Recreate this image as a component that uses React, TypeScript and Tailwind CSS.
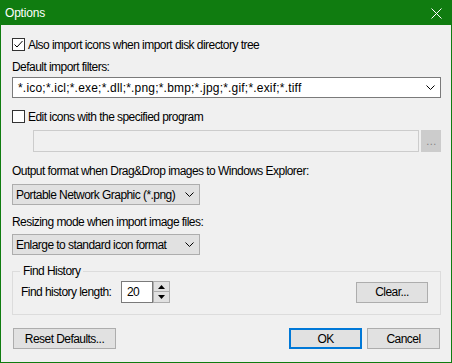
import React from 'react'

const font = { fontFamily: '"Liberation Sans", Arial, sans-serif' }

function Chevron() {
  return (
    <svg width="9" height="5" viewBox="0 0 9 5" className="shrink-0">
      <path d="M0.5 0.5 L4.5 4.5 L8.5 0.5" fill="none" stroke="#000" strokeWidth="1" />
    </svg>
  )
}

function Checkbox({ checked }: { checked?: boolean }) {
  return (
    <div className="w-[13px] h-[13px] border border-[#333] bg-white flex items-center justify-center shrink-0">
      {checked && (
        <svg width="11" height="11" viewBox="0 0 11 11">
          <path d="M1.5 5.5 L4 8 L9.5 2" fill="none" stroke="#000" strokeWidth="1" />
        </svg>
      )}
    </div>
  )
}

function Button({ children, w, primary }: { children: React.ReactNode; w: string; primary?: boolean }) {
  return (
    <div
      className={`${w} h-[21px] flex items-center justify-center bg-[#e1e1e1] text-black whitespace-nowrap ${
        primary ? 'border-2 border-[#0078d7]' : 'border border-[#adadad]'
      }`}
    >
      {children}
    </div>
  )
}

function Dropdown({ label }: { label: string }) {
  return (
    <div className="w-[188px] h-[21px] border border-[#adadad] bg-[#e1e1e1] flex items-center pl-[3px] pr-[5px] whitespace-nowrap">
      <span className="flex-1">{label}</span>
      <Chevron />
    </div>
  )
}

export default function App() {
  return (
    <div style={font} className="w-[452px] h-[363px] border border-[#107c10] bg-[#f0f0f0] text-[12px] leading-[16px] tracking-[-0.55px] text-black flex flex-col overflow-hidden whitespace-nowrap">
      {/* Barra de titulo */}
      <div className="h-[24px] bg-[#107c10] flex items-center justify-between pl-[4px] pr-[9px] text-white shrink-0">
        <span className="text-[12px] tracking-[-0.2px]">Options</span>
        <svg width="11" height="11" viewBox="0 0 11 11">
          <path d="M0.5 0.5 L10.5 10.5 M10.5 0.5 L0.5 10.5" stroke="#fff" strokeWidth="1" />
        </svg>
      </div>

      <div className="pl-[11px] pr-[10px] flex flex-col">
        <div className="mt-[12px] h-[15px] flex items-center gap-[3px]">
          <Checkbox checked />
          <span>Also import icons when import disk directory tree</span>
        </div>

        <div className="mt-[7px] h-[16px]">Default import filters:</div>
        <div className="mt-[2px] h-[21px] border border-[#7a7a7a] bg-white flex items-center pl-[5px] pr-[5px]">
          <span className="flex-1 tracking-[0.2px]">*.ico;*.icl;*.exe;*.dll;*.png;*.bmp;*.jpg;*.gif;*.exif;*.tiff</span>
          <Chevron />
        </div>

        <div className="mt-[11px] h-[15px] flex items-center gap-[3px]">
          <Checkbox />
          <span>Edit icons with the specified program</span>
        </div>

        <div className="mt-[6px] h-[22px] flex pl-[21px] gap-[2px]">
          <div className="w-[386px] border border-[#cccccc] bg-[#f0f0f0]" />
          <div className="w-[20px] bg-[#cccccc] flex items-center justify-center text-[#838383] text-[11px]">…</div>
        </div>

        <div className="mt-[11px] h-[16px]">Output format when Drag&amp;Drop images to Windows Explorer:</div>
        <div className="mt-[5px]">
          <Dropdown label="Portable Network Graphic (*.png)" />
        </div>

        <div className="mt-[9px] h-[16px]">Resizing mode when import image files:</div>
        <div className="mt-[4px]">
          <Dropdown label="Enlarge to standard icon format" />
        </div>

        {/* Historico de pesquisa */}
        <fieldset className="mt-[8px] border border-[#dcdcdc] pl-[8px] pr-[12px] pb-[11px]">
          <legend className="ml-[-1px] px-[3px] h-[16px]">Find History</legend>
          <div className="mt-[2px] flex items-center">
            <span className="w-[100px]">Find history length:</span>
            <div className="h-[22px] w-[32px] border border-[#7a7a7a] bg-white flex items-center pl-[5px]">20</div>
            <div className="h-[22px] w-[17px] flex flex-col">
              <div className="h-[11px] border border-[#adadad] bg-[#e1e1e1] flex items-center justify-center">
                <svg width="7" height="4" viewBox="0 0 7 4"><path d="M3.5 0 L7 4 L0 4 Z" fill="#000" /></svg>
              </div>
              <div className="h-[11px] border border-t-0 border-[#adadad] bg-[#e1e1e1] flex items-center justify-center">
                <svg width="7" height="4" viewBox="0 0 7 4"><path d="M0 0 L7 0 L3.5 4 Z" fill="#000" /></svg>
              </div>
            </div>
            <div className="flex-1" />
            <Button w="w-[72px]">Clear...</Button>
          </div>
        </fieldset>

        <div className="mt-[13px] flex pl-[1px] pr-[1px]">
          <Button w="w-[103px]">Reset Defaults...</Button>
          <div className="flex-1" />
          <Button w="w-[73px]" primary>OK</Button>
          <div className="w-[5px]" />
          <Button w="w-[73px]">Cancel</Button>
        </div>
      </div>
    </div>
  )
}
